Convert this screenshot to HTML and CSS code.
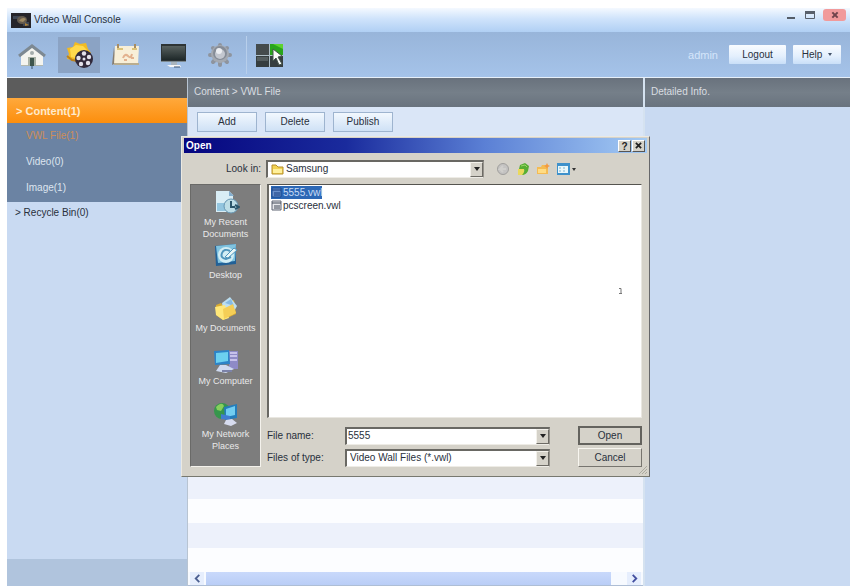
FILE: index.html
```html
<!DOCTYPE html>
<html lang="en">
<head>
<meta charset="utf-8">
<title>Video Wall Console</title>
<link rel="stylesheet" href="styles.css">
</head>
<body>
<div class="app">
  <header class="titlebar">
    <svg class="logo" viewBox="0 0 20 15"><rect width="20" height="15" fill="#25242a"/><path d="M2 3h7v3H2zM12 9h6v4h-6z" fill="#3e4654"/><ellipse cx="11" cy="7" rx="5" ry="4" fill="#655b4e"/><path d="M8 8q3-5 7-2l-3 3z" fill="#a08b64"/><path d="M14 10l4 2-4 1z" fill="#b18337"/></svg>
    <h1>Video Wall Console</h1>
    <div class="winctl">
      <button aria-label="Minimize"><svg viewBox="0 0 12 12"><path d="M2 8h8v2H2z" fill="#555d68"/></svg></button>
      <button aria-label="Maximize"><svg viewBox="0 0 12 12"><path d="M1.500 2.500h9v7h-9z" fill="none" stroke="#59606b"/><path d="M1 2h10v3H1z" fill="#59606b"/></svg></button>
      <button class="close" aria-label="Close"><svg viewBox="0 0 12 12"><path d="M2 2l8 8M10 2l-8 8" stroke="#70444b" stroke-width="3"/></svg></button>
    </div>
  </header>

  <nav class="toolbar" aria-label="Main">
    <button aria-label="Home"><svg viewBox="0 0 30 30"><path d="M4 14l11-8 11 8v12H4z" fill="#f4f4ef"/><path d="M2 16L15 6l13 10" fill="none" stroke="#7d8992" stroke-width="3"/><path d="M4 25h22v1H4z" fill="#b2b8af"/><path d="M11 17h8v9h-8z" fill="#a9b2a6"/><path d="M13 18h4v8h-4z" fill="#3f564d"/><path d="M14 26h2v3h-2z" fill="#6b89a8"/><circle cx="15" cy="13" r="2" fill="#a5adac"/></svg></button>
    <button class="active" aria-label="Content"><svg viewBox="0 0 30 30"><path d="M3 8l6-1 2-5 5 2 6-1 2 6 3 4-3 5-5 3-6 1-5-2-5-1 2-5z" fill="#f2bb22"/><path d="M6 9l6-4 7 1 4 4-7 9-9-2z" fill="#ffd94c"/><path d="M3 16l5 4 6 1" fill="none" stroke="#bb801d" stroke-width="2"/><circle cx="20" cy="19" r="9" fill="#31293a"/><g fill="#e3e1eb"><circle cx="20" cy="13.500" r="2.200"/><circle cx="25" cy="17" r="2.200"/><circle cx="24" cy="23" r="2.200"/><circle cx="17" cy="24" r="2.200"/><circle cx="14.500" cy="18" r="2.200"/><circle cx="20" cy="19" r="1.500"/></g></svg></button>
    <button aria-label="Schedule"><svg viewBox="0 0 30 30"><path d="M3 7L1 25l4-2z" fill="#877d70"/><path d="M4 6h24l-1 18H3z" fill="#f8efd8"/><path d="M3 23h25v2H3z" fill="#b9ad8f"/><path d="M7 4v5M24 4v5" stroke="#a88c61" stroke-width="2"/><path d="M6 9h6M21 9h5" stroke="#dcc379" stroke-width="2"/><path d="M12 18q2-5 5-2t4-2M13 20h3M20 18h3" fill="none" stroke="#e3b28f" stroke-width="2"/></svg></button>
    <button aria-label="Device"><svg viewBox="0 0 30 30"><defs><linearGradient id="scr" x2="0" y2="1"><stop stop-color="#58615f"/><stop offset="1" stop-color="#1e2829"/></linearGradient></defs><path d="M3 4h25v18H3z" fill="#2e3435"/><path d="M4 6h23v14H4z" fill="url(#scr)"/><path d="M3 21h25v1H3z" fill="#7e8b93"/><path d="M13 22h6v3h-6z" fill="#a9b4bd"/><path d="M9 25h13l1 2H12z" fill="#f6f6f7"/><path d="M16 27h6" stroke="#3b5373"/></svg></button>
    <button aria-label="Settings"><svg viewBox="0 0 30 30"><g stroke="#8e949e" stroke-width="4" stroke-linecap="round"><path d="M15 5v20M5 15h20M8 8l14 14M22 8L8 22"/></g><circle cx="15" cy="14" r="9" fill="#a4a9b1"/><circle cx="15" cy="13" r="7" fill="#858c97"/><circle cx="15" cy="14" r="5" fill="#c3c7cf"/><circle cx="14" cy="11" r="3" fill="#eceef2"/></svg></button>
    <span class="divider"></span>
    <button aria-label="Video wall"><svg viewBox="0 0 30 30"><path d="M1 4h13v11H1z" fill="#444b4c"/><path d="M15 4h13v11H15z" fill="#29a51b"/><path d="M18 4h10v5z" fill="#5dd32e"/><path d="M1 16h13v11H1zM15 16h13v11H15z" fill="#363e3f"/><path d="M2 17h11v4H2z" fill="#545d5e"/><path d="M1 15.500h27M14.500 4v23" stroke="#aebfc7"/><path d="M18 9l9 7-4 1 4 7-3 1-3-7-3 3z" fill="#fbfcfa" stroke="#47564c"/></svg></button>
    <div class="account"><span class="user">admin</span><button class="pill logout">Logout</button><button class="pill help">Help <i></i></button></div>
  </nav>

  <div class="body">
    <aside class="sidebar">
      <div class="side-head"></div>
      <a class="group" href="#">&gt; Content(1)</a>
      <ul>
        <li><a class="current" href="#">VWL File(1)</a></li>
        <li><a href="#">Video(0)</a></li>
        <li><a href="#">Image(1)</a></li>
      </ul>
      <a class="bin" href="#">&gt; Recycle Bin(0)</a>
      <div class="side-foot"></div>
    </aside>

    <main class="main">
      <h2 class="bar">Content &gt; VWL File</h2>
      <div class="actions"><button>Add</button><button>Delete</button><button>Publish</button></div>
      <div class="rows"></div>
      <div class="hscroll"><button aria-label="Scroll left"><svg viewBox="0 0 10 10"><path d="M7 1L3 5l4 4" fill="none" stroke="#4b5f91" stroke-width="2"/></svg></button><div class="track"><span class="thumb"></span></div><button aria-label="Scroll right"><svg viewBox="0 0 10 10"><path d="M3 1l4 4-4 4" fill="none" stroke="#434fa0" stroke-width="2"/></svg></button></div>

      <section class="dialog" role="dialog" aria-labelledby="dlg-title">
        <div class="dlg-bar"><h3 id="dlg-title">Open</h3><button aria-label="Help">?</button><button aria-label="Close"><svg viewBox="0 0 8 8"><path d="M1 1l6 6M7 1L1 7" stroke="#222" stroke-width="2"/></svg></button></div>
        <div class="look">
          <label for="look">Look in:</label>
          <div class="combo has-icon">
            <svg class="folder" viewBox="0 0 13 12"><path d="M1 2h4l2 2h5v7H1z" fill="#f3d353" stroke="#b58f2d"/><path d="M2 6h9v4H2z" fill="#fff09b"/></svg>
            <select id="look"><option>Samsung</option></select><span class="arrow"></span>
          </div>
          <div class="tools">
            <button aria-label="Back"><svg viewBox="0 0 14 14"><circle cx="7" cy="7" r="5.500" fill="#c4c3c2" stroke="#a09f9d"/><path d="M10 7H4l3-3M4 7l3 3" fill="none" stroke="#d0cfcc" stroke-width="2"/></svg></button>
            <button aria-label="Up one level"><svg viewBox="0 0 14 14"><path d="M2 7h6v6H2z" fill="#ead95c"/><path d="M4 3l5-2 4 3-1 5q-2 4-6 4 3-3 2-6L3 7z" fill="#57ae34"/><path d="M5 4l4-1 2 2" fill="none" stroke="#9bd86a"/></svg></button>
            <button aria-label="New folder"><svg viewBox="0 0 14 14"><path d="M1 5h4l1-2h6v9H1z" fill="#f4bb53"/><path d="M2 7h8v4H2z" fill="#ffdc83"/><path d="M11 1l1 2 2 1-2 1-1 2-1-2-2-1 2-1z" fill="#f29a42"/></svg></button>
            <button class="view" aria-label="View"><svg viewBox="0 0 20 14"><path d="M1 1h13v12H1z" fill="#3e91cb"/><path d="M2 4h10v7H2z" fill="#eaf7fa"/><path d="M3 6h2m2 0h2M3 9h2m2 0h2" stroke="#7cb4d0"/><path d="M16 6h4l-2 3z" fill="#333"/></svg></button>
          </div>
        </div>
        <div class="content">
          <nav class="places" aria-label="Places">
            <button><svg viewBox="0 0 28 26"><path d="M4 2h13l4 4v17H4z" fill="#d9edf5"/><path d="M17 2v5h5" fill="#85afcf"/><path d="M5 14h8v8H5z" fill="#93c5df"/><circle cx="19" cy="17" r="7" fill="#bddde6" stroke="#6695b2"/><path d="M19 12v6h4M23 16l4 2-4 2" fill="none" stroke="#2c566b" stroke-width="2"/></svg><span>My Recent Documents</span></button>
            <button><svg viewBox="0 0 28 26"><path d="M3 4l21-2v20L4 24z" fill="#226197"/><path d="M4 4l20-2-1 17-17 2z" fill="#80c3df"/><circle cx="14" cy="13" r="8" fill="#d2edf4"/><path d="M18 9q-6-3-8 2t4 6l5-2" fill="none" stroke="#4f94bb" stroke-width="2"/><path d="M13 15l9-9 3 2-9 8z" fill="#e9f6f6" stroke="#4f94bb"/></svg><span>Desktop</span></button>
            <button><svg viewBox="0 0 28 26"><path d="M4 10l5-2 2 2 11-5 2 14-13 6-7-5z" fill="#d8ab32"/><path d="M10 8l8-6 7 9-5 9-8-1z" fill="#bddff1"/><path d="M13 8l6-4 3 7z" fill="#87bae1"/><path d="M3 12l10-2 4 13-6 2-7-5z" fill="#ffe779"/><path d="M11 14l10-5 3 9-12 6z" fill="#f5ce56"/></svg><span>My Documents</span></button>
            <button><svg viewBox="0 0 28 26"><path d="M17 3h9v18h-9z" fill="#8e8ac6"/><path d="M18 5h7M18 8h7M18 12h7" stroke="#c6c1ea" stroke-width="2"/><path d="M2 3l15-1 1 14-15 1z" fill="#2c83c8"/><path d="M4 5l12-1v9L4 15z" fill="#6cd0f0"/><path d="M8 17h6l8 4-8 4-10-2z" fill="#ced9f0"/><path d="M10 23h10" stroke="#7b82a9" stroke-width="2"/></svg><span>My Computer</span></button>
            <button><svg viewBox="0 0 28 26"><circle cx="10" cy="10" r="8" fill="#36964c"/><path d="M4 6q6-6 8-1l-3 5-4-1z" fill="#87d05d"/><path d="M12 6l13-3v14l-12 2z" fill="#247dbb"/><path d="M14 8l9-3v9l-9 2z" fill="#71cdf1"/><path d="M9 13l9 2v4l-9-1z" fill="#407cd0"/><path d="M14 19l6-1 5 4-6 3-7-2z" fill="#d7dcef"/></svg><span>My Network Places</span></button>
          </nav>
          <div class="files">
            <div class="listing">
              <ul>
                <li class="selected"><svg viewBox="0 0 11 11"><path d="M1 1h9v9H1z" fill="#6b91cc" stroke="#19488f"/><path d="M1 3h9M3 6h6M3 8h6" stroke="#173d80"/></svg><span>5555.vwl</span></li>
                <li><svg viewBox="0 0 11 11"><path d="M1 1h9v9H1z" fill="#e6e7eb" stroke="#5f6573"/><path d="M1 3h9M3 6h6M3 8h6" stroke="#3f4654"/></svg><span>pcscreen.vwl</span></li>
              </ul>
              <svg class="cursor" viewBox="0 0 5 8"><path d="M1 1.500h2v5M1 6.500h3" fill="none" stroke="#777"/></svg>
            </div>
            <form class="fields">
              <label for="fname">File name:</label>
              <div class="combo"><input id="fname" type="text" value="5555"><span class="arrow"></span></div>
              <button class="default" type="button">Open</button>
              <label for="ftype">Files of type:</label>
              <div class="combo"><select id="ftype"><option>Video Wall Files (*.vwl)</option></select><span class="arrow"></span></div>
              <button type="button">Cancel</button>
            </form>
          </div>
        </div>
        <svg class="grip" viewBox="0 0 10 10"><path d="M9 1L1 9M9 4L4 9M9 7L7 9" stroke="#aaa99f"/></svg>
      </section>
    </main>

    <aside class="detail"><h2 class="bar">Detailed Info.</h2></aside>
  </div>
</div>
</body>
</html>
```
FILE: styles.css
```css
* { box-sizing: border-box; }
body {
  margin: 0;
  background: #fff;
  color: #28303c;
  font: 10px/12px "Liberation Sans", Arial, sans-serif;
}
h1, h2, h3, ul { margin: 0; padding: 0; font: inherit; list-style: none; }
button, input, select { font: inherit; color: inherit; margin: 0; padding: 0; border: 0; background: none; }
a { color: inherit; text-decoration: none; }
svg { display: block; flex: none; }

.app {
  display: flex;
  flex-direction: column;
  min-height: 100vh;
  padding: 8px 1px 1px 7px;
}

/* Window title */
.titlebar {
  display: flex;
  align-items: center;
  height: 24px;
  padding-left: 4px;
  background: linear-gradient(#f4f9ff, #cfe3fb 45%, #b0cff4);
}
.logo { width: 20px; height: 15px; margin-right: 3px; }
.winctl { display: flex; align-self: flex-start; gap: 7px; margin-left: auto; padding: 1px 4px 0 0; }
.winctl button { display: grid; place-items: center; width: 12px; height: 12px; }
.winctl svg { width: 12px; height: 12px; }
.winctl .close { width: 23px; border-radius: 3px; background: #f19a9b; }
.winctl .close svg { width: 8px; height: 8px; }

/* Main toolbar */
.toolbar {
  display: flex;
  align-items: center;
  gap: 5px;
  height: 45px;
  padding: 0 9px 0 4px;
  background: linear-gradient(#98b5da, #a5c3e9);
}
.toolbar > button { display: grid; place-items: center; width: 42px; height: 36px; }
.toolbar > button svg { width: 30px; height: 30px; }
.toolbar .active { background: #8ba3c4; }
.divider { width: 1px; height: 38px; margin-right: -3px; background: #b8cfeb; }
.account { display: flex; align-items: center; gap: 7px; margin-left: auto; }
.user { margin-right: 4px; color: #d5e5fa; font-size: 11px; }
.pill {
  height: 19px;
  border-radius: 1px;
  background: linear-gradient(#f9fcff, #e3effd 60%, #c9dff8);
}
.logout { width: 57px; }
.help { width: 48px; }
.help i { display: inline-block; margin: 0 0 2px 3px; border: 2px solid transparent; border-top: 3px solid #44546b; border-bottom: 0; }

/* Columns */
.body { display: flex; flex: 1; gap: 2px; border-top: 1px solid #e6eff9; background: #d5e2f0; }
.bar {
  flex: none;
  height: 29px;
  padding: 8px 6px 0;
  background: linear-gradient(#69727d, #757f89 50%, #69737e);
  color: #d9dde1;
}
.sidebar { display: flex; flex-direction: column; width: 180px; margin-right: -2px; background: #c9daf2; }
.side-head { height: 20px; background: #5c5c5c; }
.group {
  height: 25px;
  padding: 7px 9px;
  background: linear-gradient(#ffa93c, #fc8e0d);
  color: #ffeacb;
  font-size: 11px;
  font-weight: bold;
}
.sidebar ul { padding-bottom: 1px; background: #6b83a3; color: #dde5ef; }
.sidebar li { height: 26px; padding: 7px 19px; }
.current { color: #cd8d58; }
.bin { padding: 5px 8px; }
.side-foot { height: 27px; margin-top: auto; background: #b0c4dd; }

.main { position: relative; display: flex; flex: 1; flex-direction: column; border-left: 1px solid #b8c4d2; background: #d9e6f7; }
.actions { display: flex; gap: 8px; height: 29px; padding: 5px 9px; background: #dae6f7; }
.actions button { width: 60px; height: 20px; border: 1px solid #9eb4cf; background: linear-gradient(#f2f8fe, #cfe1f5); }
.rows { flex: 1; background: repeating-linear-gradient(to top, #fcfdff 0 24px, #edf1fb 24px 49px); }
.hscroll { display: flex; height: 14px; gap: 2px; padding: 0 2px; background: #f7faff; border-bottom: 1px solid #aebed5; }
.hscroll button { display: grid; place-items: center; width: 14px; background: #e6eefd; }
.hscroll svg { width: 9px; height: 9px; }
.track { flex: 1; padding-right: 14px; }
.thumb { display: block; height: 13px; background: linear-gradient(#c9d9fb, #b9cdf6); }
.detail { width: 205px; background: #c9daf2; }

/* File dialog, floating over the list */
.dialog {
  position: absolute;
  top: 58px;
  left: -7px;
  right: -7px;
  padding: 1px 2px 9px;
  border: 1px solid;
  border-color: #ebe9e2 #66676a #77786f #ebe9e2;
  background: #d5d2c9;
}
.dlg-bar {
  display: flex;
  align-items: center;
  gap: 1px;
  height: 15px;
  padding: 0 2px;
  background: linear-gradient(90deg, #06067f, #1a2b9d 35%, #5b80d5 65%, #a4cbf4);
  color: #fff;
  font-weight: bold;
}
.dlg-bar h3 { margin-right: auto; }
.dlg-bar button { display: grid; place-items: center; width: 13px; height: 12px; border: 1px solid; border-color: #fff #555 #555 #fff; background: #d5d2c9; color: #222; }
.dlg-bar svg { width: 7px; height: 7px; }
.look { display: flex; align-items: center; height: 31px; }
.look label { width: 77px; margin-right: 5px; text-align: right; }
.look .combo { width: 218px; }
.tools { display: flex; gap: 6px; margin-left: 12px; }
.tools svg { width: 14px; height: 14px; }
.tools .view svg { width: 20px; }

.combo {
  position: relative;
  display: flex;
  height: 18px;
  border: 1px solid;
  border-top: 2px solid #696863;
  border-left: 2px solid #696863;
  border-right-color: #96938c;
  border-bottom-color: #eeece6;
  background: #fff;
}
.combo select, .combo input { flex: 1; min-width: 0; padding: 0 3px; appearance: none; outline: 0; }
.combo input { padding: 0 1px; }
.combo.has-icon select { padding-left: 18px; }
.folder { position: absolute; left: 3px; top: 1px; width: 13px; height: 12px; }
.arrow {
  display: grid;
  place-items: center;
  width: 13px;
  border: 1px solid;
  border-color: #f3f1eb #6d6b65 #6d6b65 #f3f1eb;
  background: #d5d2c9;
  pointer-events: none;
}
.arrow::after { content: ""; border: 3px solid transparent; border-top: 4px solid #222; border-bottom: 0; }

.content { display: flex; gap: 6px; padding: 0 5px 0 6px; }
.places {
  display: grid;
  grid-template-rows: repeat(5, 53px);
  align-content: start;
  width: 71px;
  padding-top: 4px;
  border: 1px solid #6a6a68;
  border-right-color: #f4f2ec;
  border-bottom-color: #f4f2ec;
  background: #7d7d7d;
  color: #e9e9e9;
  font-size: 9px;
}
.places button { display: flex; flex-direction: column; align-items: center; gap: 1px; }
.places svg { width: 28px; height: 26px; }
.places span { line-height: 12px; }
.files { display: flex; flex: 1; flex-direction: column; }
.listing {
  position: relative;
  height: 234px;
  padding: 1px 2px;
  border: 1px solid #e9e7e1;
  border-top: 1px solid #55544f;
  border-left: 2px solid #696863;
  background: #fff;
}
.listing li { display: flex; align-items: center; gap: 1px; width: max-content; height: 13px; }
.listing li svg { width: 11px; height: 11px; }
.listing .selected { background: #2d68b5; color: #c8dcf5; }
.cursor { position: absolute; right: 18px; bottom: 122px; width: 5px; height: 8px; }
.fields {
  display: grid;
  grid-template-columns: 78px 205px 1fr;
  grid-template-rows: 19px 19px;
  align-items: center;
  gap: 3px 0;
  padding-top: 8px;
}
.fields button { justify-self: end; width: 64px; height: 19px; border: 1px solid; border-color: #f8f6f0 #77756f #77756f #f8f6f0; }
.fields .default { border: 2px solid #64635e; }
.grip { position: absolute; right: 1px; bottom: 1px; width: 10px; height: 10px; }
```
